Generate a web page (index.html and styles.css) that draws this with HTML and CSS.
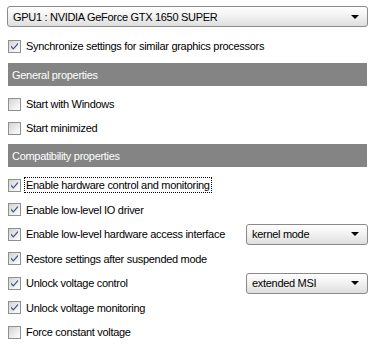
FILE: index.html
```html
<!DOCTYPE html>
<html>
<head>
<meta charset="utf-8">
<link rel="stylesheet" href="styles.css">
</head>
<body>
<div class="panel">
  <div class="select select-wide">
    <span class="select-text">GPU1 : NVIDIA GeForce GTX 1650 SUPER</span>
    <span class="arrow"></span>
  </div>
  <div class="row row-sync">
    <span class="cb checked"></span><span class="label">Synchronize settings for similar graphics processors</span>
  </div>

  <div class="header header-general">General properties</div>
  <div class="row row-first">
    <span class="cb"></span><span class="label">Start with Windows</span>
  </div>
  <div class="row">
    <span class="cb"></span><span class="label">Start minimized</span>
  </div>

  <div class="header header-compat">Compatibility properties</div>
  <div class="row row-compat row-compat-first">
    <span class="cb checked"></span><span class="label focus">Enable hardware control and monitoring</span>
  </div>
  <div class="row row-compat">
    <span class="cb checked"></span><span class="label">Enable low-level IO driver</span>
  </div>
  <div class="row row-compat">
    <span class="cb checked"></span><span class="label grow">Enable low-level hardware access interface</span>
    <div class="select select-small">
      <span class="select-text">kernel mode</span>
      <span class="arrow"></span>
    </div>
  </div>
  <div class="row row-compat">
    <span class="cb checked"></span><span class="label">Restore settings after suspended mode</span>
  </div>
  <div class="row row-compat">
    <span class="cb checked"></span><span class="label grow">Unlock voltage control</span>
    <div class="select select-small">
      <span class="select-text">extended MSI</span>
      <span class="arrow"></span>
    </div>
  </div>
  <div class="row row-compat">
    <span class="cb checked"></span><span class="label">Unlock voltage monitoring</span>
  </div>
  <div class="row row-compat">
    <span class="cb"></span><span class="label">Force constant voltage</span>
  </div>
</div>
</body>
</html>
```
FILE: styles.css
```css
html, body {
  margin: 0;
  padding: 0;
  background: #ffffff;
}
body {
  width: 375px;
  height: 345px;
  overflow: hidden;
  font-family: "Liberation Sans", Arial, sans-serif;
  font-size: 11px;
  letter-spacing: -0.3px;
  color: #000;
}
.panel {
  padding: 6px 8px 0 8px;
  display: flex;
  flex-direction: column;
}
.select {
  box-sizing: border-box;
  height: 21px;
  border: 1px solid #8a8a8a;
  border-radius: 3px;
  background: linear-gradient(#ffffff 0%, #f2f2f2 45%, #dedede 100%);
  display: flex;
  align-items: center;
  padding: 0 8px 0 5px;
}
.select-wide {
  margin-left: -1px;
  width: 361px;
}
.select-text {
  flex: 1;
  white-space: nowrap;
}
.arrow {
  width: 0;
  height: 0;
  border-left: 4px solid transparent;
  border-right: 4px solid transparent;
  border-top: 4px solid #000;
}
.select-small {
  width: 122px;
  margin-right: -1px;
}
.row {
  display: flex;
  align-items: center;
  height: 24px;
}
.row-compat {
  height: 24.5px;
}
.row-sync {
  margin-top: 7px;
}
.row-first {
  margin-top: 6px;
}
.row-compat-first {
  margin-top: 6px;
}
.cb {
  box-sizing: border-box;
  width: 13px;
  height: 13px;
  border: 1px solid #8e8f8f;
  background: linear-gradient(135deg, #d2d2d2 0%, #eeeeee 60%, #ffffff 100%);
  flex: none;
  margin-right: 3px;
}
.cb.checked {
  background:
    url("data:image/svg+xml;utf8,<svg xmlns='http://www.w3.org/2000/svg' width='11' height='11'><path d='M2 4.5 L4.3 7 L9 1.8 L9 3.6 L4.3 8.8 L2 6.3 Z' fill='%23404f88'/></svg>") no-repeat center,
    linear-gradient(135deg, #d2d2d2 0%, #eeeeee 60%, #ffffff 100%);
}
.label {
  white-space: nowrap;
  padding: 1px 1px;
  border: 1px dotted transparent;
}
.label.focus {
  border-color: #000;
}
.grow {
  flex: 1;
}
.header {
  height: 23px;
  background: #848484;
  color: #fff;
  display: flex;
  align-items: center;
  padding-left: 4px;
}
.header-general {
  margin-top: 5px;
}
.header-compat {
  margin-top: 4px;
}
```
